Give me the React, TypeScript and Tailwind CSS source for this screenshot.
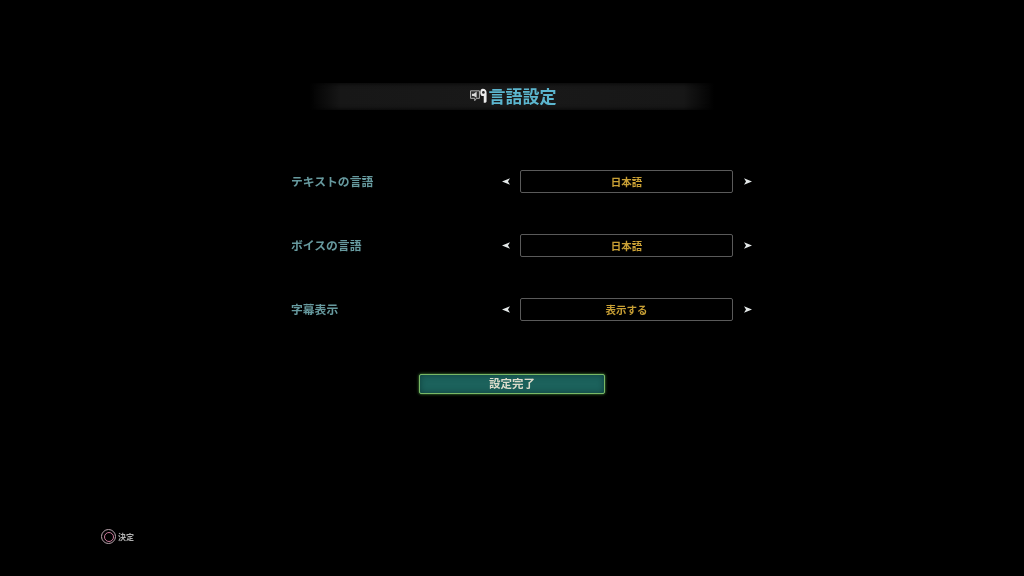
const font = "font-['Noto_Sans_CJK_JP','Noto_Sans',sans-serif]";

const rows = [
  { label: 'テキストの言語', value: '日本語' },
  { label: 'ボイスの言語', value: '日本語' },
  { label: '字幕表示', value: '表示する' },
];

function Arrow({ left }: { left?: boolean }) {
  return (
    <svg width="8" height="8" viewBox="0 0 8 8" className="shrink-0 -translate-y-[0.5px]">
      <path d={left ? 'M0 4 L8 0.8 L6 4 L8 7.2 Z' : 'M8 4 L0 0.8 L2 4 L0 7.2 Z'} fill="#e4e8e8" />
    </svg>
  );
}

function LangIcon() {
  return (
    <svg width="17" height="15" viewBox="0 0 18 16" className="shrink-0">
      <path d="M0.5 3 H10 V11 H7 L5 13.5 V11 H0.5 Z" fill="#2a2a2a" stroke="#b8b8b8" strokeWidth="1" />
      <path d="M2 6 H4 L7 3.8 V10.4 L4 8.4 H2 Z" fill="#d8d8d8" />
      <path d="M13.5 0.8 C16.3 0.8 17.6 2.6 17.6 5 V14 C17.6 15 16.8 15.6 15.8 15.6 H14.6 V8.6 H13.5 C11.8 8.6 10.9 6.9 10.9 4.7 C10.9 2.4 11.8 0.8 13.5 0.8 Z" fill="#ececec" />
      <circle cx="14.2" cy="4.7" r="1.4" fill="#222" />
    </svg>
  );
}

export default function App() {
  return (
    <div className={`w-[1024px] h-[576px] bg-black overflow-hidden flex flex-col blur-[0.4px] ${font}`}>
      <div className="mt-[83px] mx-auto w-[408px] h-[27px] pl-[2px] pb-[2px] flex items-center justify-center gap-[2px] bg-[linear-gradient(90deg,#000000_0%,#171717_8%,#191919_50%,#171717_92%,#000000_100%)] shadow-[inset_0_0_5px_#000000]">
        <LangIcon />
        <span className="text-[17px] leading-none font-bold text-[#5cb6cf]">言語設定</span>
      </div>

      <div className="mt-[60px] ml-[291px] w-[461px] flex flex-col gap-[41px]">
        {rows.map((row) => (
          <div key={row.label} className="h-[23px] flex items-center">
            <span className="w-[211px] pb-[1px] text-[11.8px] leading-[16px] font-bold text-[#679a9f]">{row.label}</span>
            <Arrow left />
            <div className="ml-[10px] mr-[11px] w-[213px] h-[23px] border border-[#5a5a5a] rounded-[2px] flex items-center justify-center text-[10.5px] font-bold text-[#c9a035]">
              {row.value}
            </div>
            <Arrow />
          </div>
        ))}
      </div>

      <div className="mt-[53px] mx-auto w-[186px] h-[20px] border border-[#79b866] rounded-[2px] bg-[#1c625c] shadow-[0_0_3px_#4f9a45,inset_0_0_6px_#0f3f3c] flex items-center justify-center text-[11.5px] font-bold text-[#dcdccc]">
        設定完了
      </div>

      <div className="mt-[135px] ml-[101px] flex items-center gap-[2px]">
        <div className="w-[15px] h-[15px] rounded-full border border-[#b9a3ad] flex items-center justify-center">
          <div className="w-[10px] h-[10px] rounded-full border-[1.5px] border-[#c9789a]" />
        </div>
        <span className="text-[8px] font-bold text-[#b0b0b0]">決定</span>
      </div>
    </div>
  );
}
